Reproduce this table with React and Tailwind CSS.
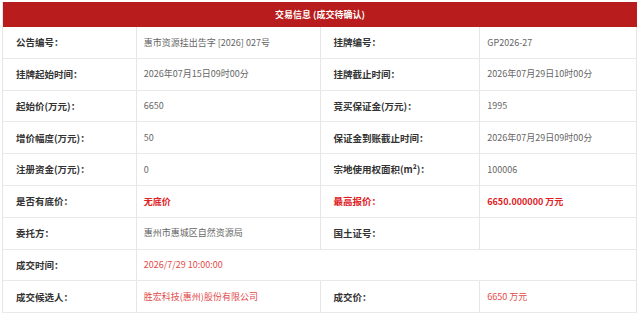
import React from "react";

const rows = [
  [
    { label: "公告编号：", value: "惠市资源挂出告字 [2026] 027号" },
    { label: "挂牌编号：", value: "GP2026-27" },
  ],
  [
    { label: "挂牌起始时间：", value: "2026年07月15日09时00分" },
    { label: "挂牌截止时间：", value: "2026年07月29日10时00分" },
  ],
  [
    { label: "起始价(万元)：", value: "6650" },
    { label: "竞买保证金(万元)：", value: "1995" },
  ],
  [
    { label: "增价幅度(万元)：", value: "50" },
    { label: "保证金到账截止时间：", value: "2026年07月29日09时00分" },
  ],
  [
    { label: "注册资金(万元)：", value: "0" },
    { label: "宗地使用权面积(m²)：", value: "100006" },
  ],
  [
    { label: "是否有底价：", value: "无底价", valueClass: "text-[#e0211f] font-bold" },
    {
      label: "最高报价：",
      labelClass: "text-[#e0211f]",
      value: "6650.000000 万元",
      valueClass: "text-[#e0211f] font-bold",
    },
  ],
  [
    { label: "委托方：", value: "惠州市惠城区自然资源局" },
    { label: "国土证号：", value: "" },
  ],
];

function Label({ children, className = "", width }) {
  return (
    <div
      className={`${width} flex items-center pl-[13px] border-r border-[#e6e6e6] text-[9.5px] font-bold ${
        className || "text-[#333]"
      }`}
    >
      {children}
    </div>
  );
}

function Value({ children, className = "", width }) {
  return (
    <div
      className={`${width} flex items-center pl-[7px] border-r border-[#e6e6e6] text-[9px] ${
        className || "text-[#666]"
      }`}
    >
      {children}
    </div>
  );
}

export default function App() {
  return (
    <div
      className="w-[640px] h-[314px] bg-white overflow-hidden pt-[2px] pl-[2px]"
      style={{ fontFamily: '"Noto Sans CJK SC", "Noto Sans", sans-serif' }}
    >
      <div className="w-[635px] border-l border-[#e6e6e6]">
        <div className="h-[25px] bg-[#b81c1c] flex items-center justify-center text-white text-[9px] font-bold">
          交易信息 (成交待确认)
        </div>
        {rows.map(([a, b], i) => (
          <div key={i} className="h-[31.8px] flex border-b border-[#e9e9e9]">
            <Label width="w-[134px]" className={a.labelClass}>{a.label}</Label>
            <Value width="w-[184px]" className={a.valueClass}>{a.value}</Value>
            <Label width="w-[160px]" className={b.labelClass}>{b.label}</Label>
            <Value width="w-[157px]" className={b.valueClass}>{b.value}</Value>
          </div>
        ))}
        <div className="h-[31.8px] flex border-b border-[#e9e9e9]">
          <Label width="w-[134px]">成交时间：</Label>
          <Value width="w-[501px]" className="text-[#e24a4a]">2026/7/29 10:00:00</Value>
        </div>
        <div className="h-[31.8px] flex border-b border-[#e9e9e9]">
          <Label width="w-[134px]">成交候选人：</Label>
          <Value width="w-[184px]" className="text-[#e24a4a]">胜宏科技(惠州)股份有限公司</Value>
          <Label width="w-[160px]">成交价：</Label>
          <Value width="w-[157px]" className="text-[#e24a4a]">6650 万元</Value>
        </div>
      </div>
    </div>
  );
}
